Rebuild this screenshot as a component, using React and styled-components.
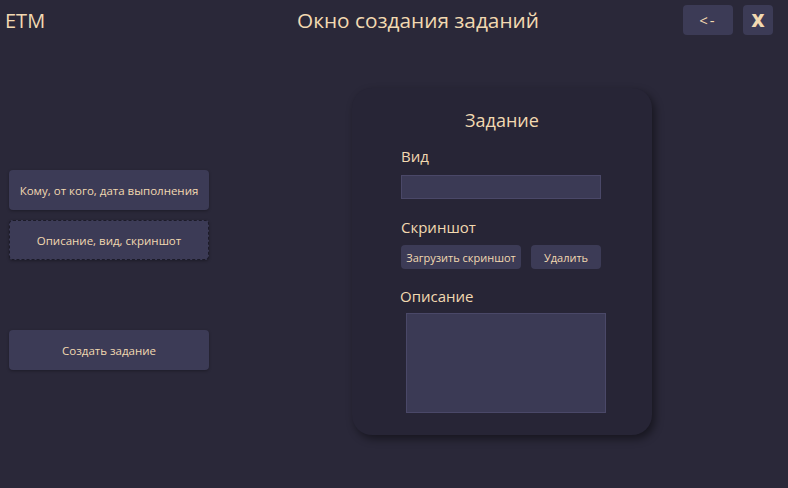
import React from 'react'
import styled, { createGlobalStyle } from 'styled-components'

const Global = createGlobalStyle`
body {
  margin: 0;
  background: #2a2839;
  font-family: "Open Sans", "Noto Sans", sans-serif;
  color: #f2d9b1;
}
`

const App = () => {
  return (
    <Page>
      <Global />
      <Topbar>
        <Logo>ETM</Logo>
        <Title>Окно создания заданий</Title>
        <Controls>
          <TopButton wide>&lt;-</TopButton>
          <TopButton bold>X</TopButton>
        </Controls>
      </Topbar>

      <Body>
        <Sidebar>
          <NavButton>Кому, от кого, дата выполнения</NavButton>
          <NavButton active>Описание, вид, скриншот</NavButton>
          <NavButton spaced>Создать задание</NavButton>
        </Sidebar>

        <Card>
          <Heading>Задание</Heading>
          <Label>Вид</Label>
          <Input />
          <Label top={18}>Скриншот</Label>
          <ButtonRow>
            <SmallButton w={120}>Загрузить скриншот</SmallButton>
            <SmallButton w={70}>Удалить</SmallButton>
          </ButtonRow>
          <Label top={17} shift={-1}>Описание</Label>
          <TextArea />
        </Card>
      </Body>
    </Page>
  )
}

export default App

const Page = styled.div`
width: 788px;
height: 488px;
overflow: hidden;
`
const Topbar = styled.div`
height: 40px;
display: flex;
align-items: center;
padding: 0 15px 0 5px;
`
const Logo = styled.div`
font-size: 20px;
flex: 1;
`
const Title = styled.div`
font-size: 20.8px;
flex: none;
margin-left: 58px;
`
const Controls = styled.div`
flex: 1;
display: flex;
justify-content: flex-end;
gap: 10px;
`
const TopButton = styled.div`
width: ${p => (p.wide ? '50px' : '30px')};
height: 30px;
display: flex;
align-items: center;
justify-content: center;
background: #3c3b56;
border-radius: 4px;
font-size: ${p => (p.bold ? '18px' : '15px')};
font-weight: ${p => (p.bold ? 800 : 400)};
letter-spacing: ${p => (p.wide ? '2px' : '0')};
`
const Body = styled.div`
display: flex;
align-items: flex-start;
`
const Sidebar = styled.div`
width: 200px;
margin: 130px 0 0 9px;
display: flex;
flex-direction: column;
gap: 10px;
`
const NavButton = styled.div`
height: 40px;
box-sizing: border-box;
display: flex;
align-items: center;
justify-content: center;
background: #3c3b56;
border-radius: 4px;
font-size: 11.5px;
box-shadow: 0 1px 3px rgba(0, 0, 0, 0.3);
border: ${p => (p.active ? '1px dashed #1c1b28' : 'none')};
margin-top: ${p => (p.spaced ? '60px' : '0')};
`
const Card = styled.div`
width: 300px;
height: 347px;
margin: 48px 0 0 143px;
box-sizing: border-box;
padding: 19px 0 0 49px;
background: #272536;
border-radius: 20px;
box-shadow: 3px 4px 8px rgba(0, 0, 0, 0.45);
display: flex;
flex-direction: column;
align-items: flex-start;
`
const Heading = styled.div`
align-self: stretch;
text-align: center;
margin-left: -49px;
font-size: 18px;
line-height: 26px;
`
const Label = styled.div`
font-size: 15px;
line-height: 20px;
margin-top: ${p => (p.top ? p.top : 13)}px;
margin-left: ${p => (p.shift ? p.shift : 0)}px;
`
const Input = styled.div`
width: 200px;
height: 24px;
box-sizing: border-box;
margin-top: 9px;
background: #3b3a55;
border: 1px solid #4a4868;
`
const ButtonRow = styled.div`
display: flex;
gap: 10px;
margin-top: 8px;
`
const SmallButton = styled.div`
width: ${p => p.w}px;
height: 24px;
display: flex;
align-items: center;
justify-content: center;
background: #3c3b56;
border-radius: 4px;
font-size: 11px;
`
const TextArea = styled.div`
width: 200px;
height: 100px;
box-sizing: border-box;
margin: 7px 0 0 5px;
background: #3b3a55;
border: 1px solid #4a4868;
`
